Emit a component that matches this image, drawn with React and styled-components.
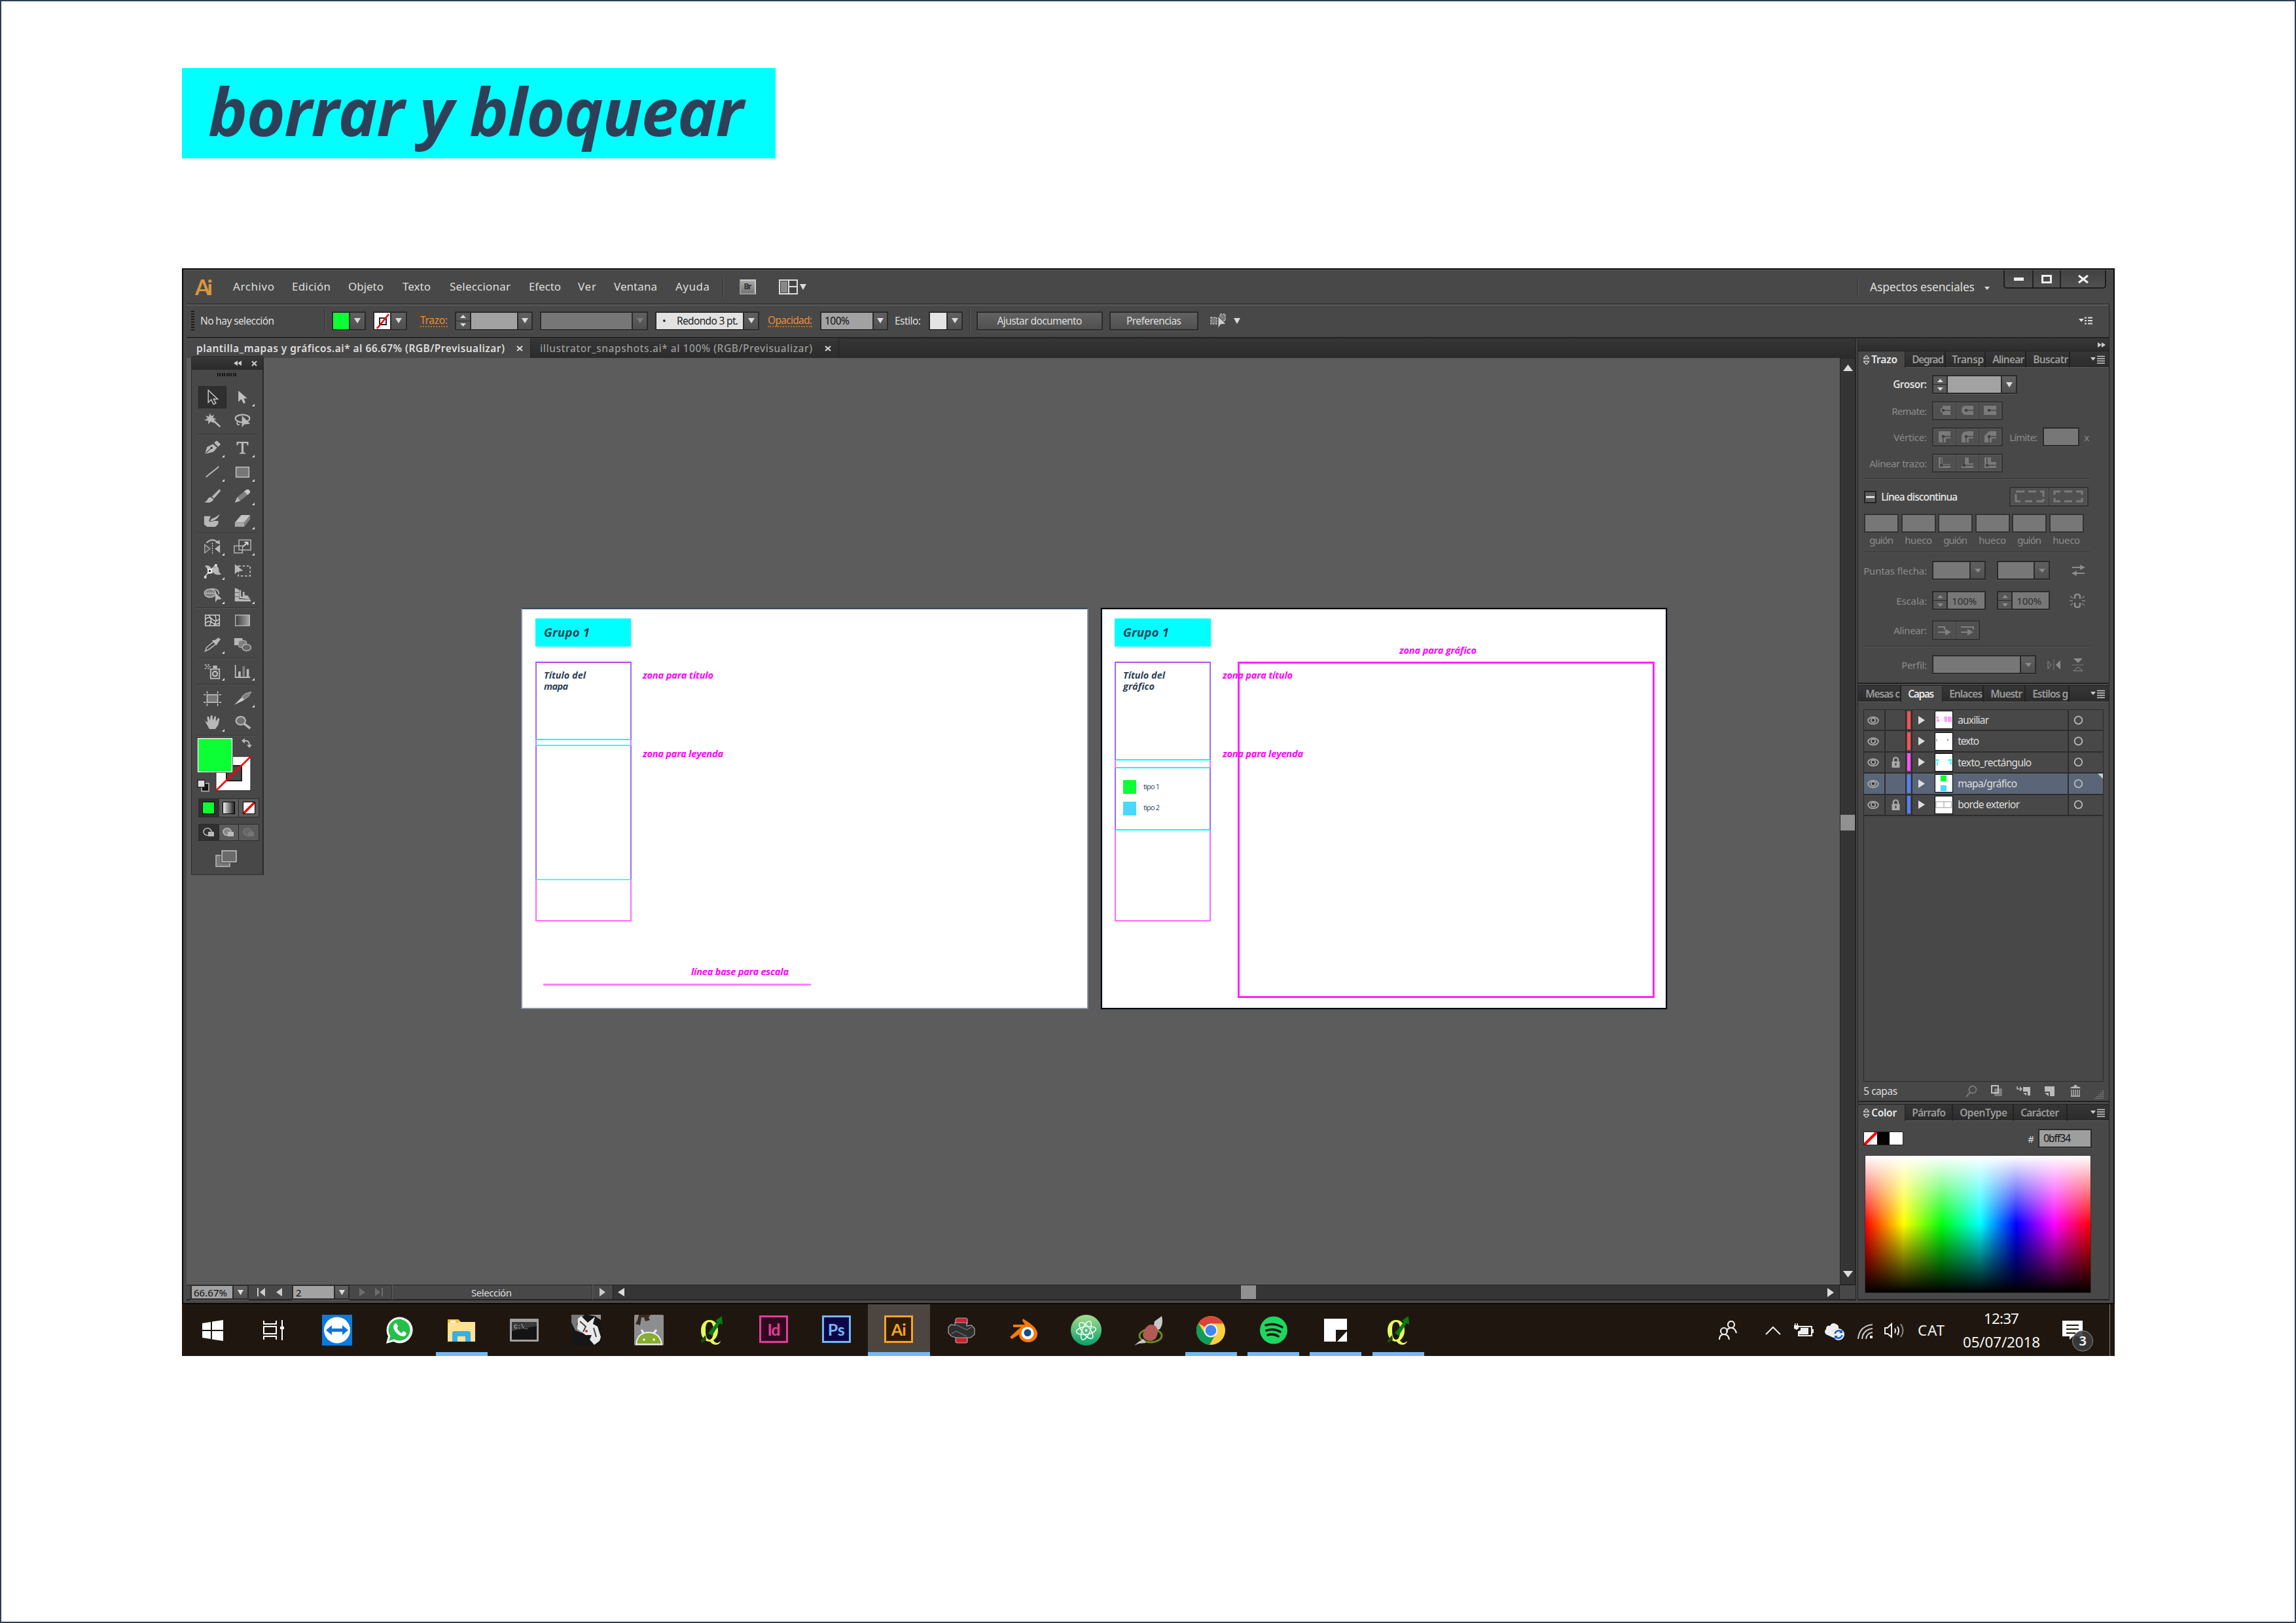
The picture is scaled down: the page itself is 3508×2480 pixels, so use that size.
import React, { useLayoutEffect, useRef, useState } from 'react';
import styled, { createGlobalStyle } from 'styled-components';

const Global = createGlobalStyle`
  *, *::before, *::after { box-sizing: border-box; }
  body { margin: 0; background: #fff; font-family: "Noto Sans", "Open Sans", sans-serif; }
  svg { display: block; flex: none; }
`;

/* ---------- text ---------- */
const TextBox = styled.span`
  display: block;
  flex: none;
  width: ${p => p.$w}px;
  margin-left: ${p => p.$ml || 0}px;
  white-space: pre;
  line-height: 1.2;
  font-family: ${p => p.$family || '"Noto Sans"'}, "Open Sans", sans-serif;
  font-size: ${p => p.$size || 16}px;
  font-weight: ${p => p.$weight || 400};
  font-style: ${p => (p.$italic ? 'italic' : 'normal')};
  color: ${p => p.$color || '#dedede'};
  border-bottom: ${p => (p.$dotted ? '2px dotted #b9722c' : '0')};
`;

function Label({ w, children, ...rest }) {
  const ref = useRef(null);
  const [spacing, setSpacing] = useState(0);
  useLayoutEffect(() => {
    const natural = ref.current.getBoundingClientRect().width;
    setSpacing((w - natural) / Math.max(1, children.length - 1));
  }, [w, children]);
  return (
    <TextBox $w={w} {...rest}>
      <span ref={ref} style={{ letterSpacing: spacing }}>{children}</span>
    </TextBox>
  );
}

/* ---------- page ---------- */
const Page = styled.main`
  width: 3508px;
  height: 2480px;
  border: 2px solid #2e3f57;
  padding: 102px 0 0 276px;
  background: #fff;
  display: flex;
  flex-direction: column;
  overflow: hidden;
`;
const Heading = styled.h1`
  margin: 0 0 168px;
  width: 907px;
  height: 138px;
  padding: 0 0 6px 40px;
  background: #00ffff;
  display: flex;
  align-items: center;
`;
const Desktop = styled.section`
  width: 2953px;
  height: 1662px;
  display: flex;
  flex-direction: column;
`;
const AppFrame = styled.div`
  height: 1583px;
  border: 2px solid #070707;
  background: #484848;
  display: flex;
  flex-direction: column;
`;

/* ---------- menu bar ---------- */
const MenuBar = styled.header`
  height: 52px;
  flex: none;
  display: flex;
  align-items: center;
  border-top: 1px solid #666;
`;
const Push = styled.div` flex: 1; `;
const VRule = styled.i`
  flex: none;
  width: 2px;
  height: ${p => p.$h || 30}px;
  margin-left: ${p => p.$ml || 0}px;
  background: #333;
  border-right: 1px solid #5e5e5e;
`;
const Slot = styled.div`
  flex: none;
  margin-left: ${p => p.$ml || 0}px;
  margin-top: ${p => p.$mt || 0}px;
`;
const BridgeBadge = styled.div`
  width: 25px;
  height: 23px;
  margin: 0 0 0 24px;
  background: linear-gradient(#aaa, #757575);
  border: 2px solid #999;
  border-right-color: #ccc;
  border-top-color: #ccc;
  display: flex;
  align-items: center;
  justify-content: center;
`;
const WinButtons = styled.div`
  align-self: flex-start;
  width: 157px;
  height: 28px;
  margin: 0 11px 0 21px;
  display: grid;
  grid-template-columns: 42px 42px 1fr;
  border: 2px solid #1e1e1e;
  border-top: 0;
  border-radius: 0 0 5px 5px;
  background: linear-gradient(#424242, #505050);
`;
const WinButton = styled.div`
  display: flex;
  align-items: center;
  justify-content: center;
  border-left: ${p => (p.$first ? 0 : 2)}px solid #222;
`;

/* ---------- control bar ---------- */
const Body = styled.div`
  margin: 0 6px 4px 5px;
  flex: 1;
  min-height: 0;
  display: flex;
  flex-direction: column;
  border-right: 1px solid #222;
`;
const ControlBar = styled.div`
  height: 53px;
  flex: none;
  display: flex;
  align-items: center;
  border-top: 1px solid #222;
  border-bottom: 2px solid #222;
  box-shadow: inset 0 2px #5c5c5c;
`;
const Grip = styled.i`
  width: 5px;
  height: 31px;
  margin-left: 7px;
  background: repeating-linear-gradient(#1c1c1c 0 2px, transparent 2px 4px);
`;
const Control = styled.div`
  flex: none;
  display: flex;
  height: ${p => p.$h || 29}px;
  width: ${p => (p.$w ? p.$w + 'px' : 'auto')};
  margin-left: ${p => p.$ml || 0}px;
  border: 2px solid #2b2b2b;
  background: #2b2b2b;
  box-shadow: 0 1px #585858;
`;
const Value = styled.div`
  flex: 1;
  min-width: 0;
  background: ${p => p.$bg || '#a2a2a2'};
  display: flex;
  align-items: center;
  overflow: hidden;
`;
const Drop = styled.div`
  width: ${p => p.$w || 22}px;
  margin-left: 2px;
  background: linear-gradient(#606060, #505050);
  display: flex;
  align-items: center;
  justify-content: center;
`;
const StepBox = styled.div`
  width: ${p => p.$w || 21}px;
  margin-right: 2px;
  display: grid;
  grid-template-rows: 1fr 1fr;
  gap: 1px;
  > * { background: #585858; display: flex; align-items: center; justify-content: center; }
`;
const Button = styled.div`
  flex: none;
  width: ${p => p.$w}px;
  height: 29px;
  margin-left: ${p => p.$ml}px;
  border: 2px solid #2b2b2b;
  background: linear-gradient(#626262, #505050);
  box-shadow: 0 1px #585858;
  display: flex;
  align-items: center;
  justify-content: center;
`;

const Tri = ({ dir = 'down', w = 10, h = 8, c = '#dcdcdc' }) => {
  const d = {
    down: `M0 0H${w}L${w / 2} ${h}Z`,
    up: `M0 ${h}H${w}L${w / 2} 0Z`,
    left: `M${w} 0V${h}L0 ${h / 2}Z`,
    right: `M0 0V${h}L${w} ${h / 2}Z`,
  }[dir];
  return <svg width={w} height={h}><path d={d} fill={c} /></svg>;
};
const Steps = ({ w, c }) => (
  <StepBox $w={w}>
    <div><Tri dir="up" w={9} h={5} c={c} /></div>
    <div><Tri w={9} h={5} c={c} /></div>
  </StepBox>
);

/* ---------- document area ---------- */
const Work = styled.div`
  flex: 1;
  min-height: 0;
  display: flex;
`;
const DocColumn = styled.div`
  position: relative;
  width: 2552px;
  display: flex;
  flex-direction: column;
  border-right: 1px solid #222;
`;
const TabBar = styled.div`
  height: 30px;
  flex: none;
  display: flex;
  background: linear-gradient(#363636, #2b2b2b);
`;
const DocTab = styled.div`
  width: ${p => p.$w}px;
  display: flex;
  align-items: center;
  background: ${p => (p.$active ? '#484848' : 'transparent')};
  border-right: 1px solid #222;
  border-top: 1px solid ${p => (p.$active ? '#5c5c5c' : '#444')};
`;
const Viewport = styled.div`
  flex: 1;
  min-height: 0;
  display: flex;
`;
const Canvas = styled.div`
  position: relative;
  width: 2526px;
  background: #5c5c5c;
  overflow: hidden;
`;
const VScroll = styled.div`
  flex: 1;
  background: #353535;
  border: 1px solid #262626;
  display: flex;
  flex-direction: column;
  align-items: center;
  padding-top: 9px;
`;
const VThumb = styled.i`
  width: 100%;
  height: 24px;
  margin: 678px 0 673px;
  background: #919191;
`;
const StatusBar = styled.div`
  height: 24px;
  flex: none;
  display: flex;
  align-items: stretch;
  border-top: 1px solid #222;
  border-bottom: 2px solid #222;
`;
const StatusTools = styled.div`
  width: 651px;
  display: flex;
  align-items: center;
`;
const HScroll = styled.div`
  width: 1875px;
  background: #353535;
  display: flex;
  align-items: center;
  border-left: 1px solid #222;
  border-right: 1px solid #222;
`;
const HThumb = styled.i`
  width: 23px;
  height: 100%;
  margin-left: 942px;
  background: #919191;
`;

/* ---------- artboards (free canvas) ---------- */
const Artboard = styled.div`
  position: absolute;
  left: ${p => p.$x}px;
  top: 382px;
  width: ${p => p.$w}px;
  height: 613px;
  background: #fff;
  border: 2px solid ${p => (p.$active ? '#05070a' : '#8b9097')};
  border-top-color: ${p => (p.$active ? '#05070a' : '#3e4b60')};
  outline: 1px solid ${p => (p.$active ? '#3e4b60' : '#4c5563')};
`;
const Placed = styled.div`
  position: absolute;
  left: ${p => p.$x - 2}px;
  top: ${p => p.$y - 2}px;
  display: flex;
`;
const Block = styled(Placed)`
  width: ${p => p.$w}px;
  height: ${p => p.$h}px;
  background: ${p => p.$bg || 'none'};
  border: ${p => p.$bw || 0}px solid ${p => p.$bc || 'transparent'};
  border-top-color: ${p => p.$top || p.$bc || 'transparent'};
  border-bottom-color: ${p => p.$bottom || p.$bc || 'transparent'};
`;
const Note = ({ x, y, w, children, size = 14.5, color = '#ff00ff', weight = 700, italic = true }) => (
  <Placed $x={x} $y={y}>
    <Label w={w} $size={size} $weight={weight} $italic={italic} $color={color} $family='"Open Sans"'>{children}</Label>
  </Placed>
);

/* ---------- tool box ---------- */
const ToolBox = styled.aside`
  position: absolute;
  left: 7px;
  top: 27px;
  width: 111px;
  height: 793px;
  background: #484848;
  border: 1px solid #2a2a2a;
  border-right-width: 2px;
  border-radius: 4px 4px 0 0;
  display: flex;
  flex-direction: column;
`;
const ToolHead = styled.div`
  height: 20px;
  background: linear-gradient(#383838, #2a2a2a);
  border-radius: 4px 4px 0 0;
  display: flex;
  align-items: center;
  justify-content: flex-end;
  gap: 15px;
  padding-right: 8px;
`;
const ToolGrip = styled.i`
  width: 29px;
  height: 5px;
  margin: 5px 0 14px 39px;
  background: repeating-linear-gradient(90deg, #161616 0 2px, transparent 2px 3.4px);
`;
const ToolGroup = styled.div`
  height: ${p => p.$h}px;
  margin-left: 8px;
  width: 92px;
  display: grid;
  grid-template-columns: 46px 46px;
  grid-auto-rows: 1fr;
`;
const ToolCell = styled.div`
  position: relative;
  display: flex;
  align-items: center;
  justify-content: center;
  ${p => p.$on && 'background: #2f2f2f; border: 1px solid #272626; margin: 1px 1px 1px 2px;'}
`;
const Corner = styled.i`
  position: absolute;
  right: 4px;
  bottom: 4px;
  border: 2px solid transparent;
  border-right-color: #ddd;
  border-bottom-color: #ddd;
`;
const ToolRule = styled.div`
  height: ${p => p.$h}px;
  margin: 0 8px;
  background: linear-gradient(#343434 50%, #565656 50%) center / 100% 2px no-repeat;
`;
const TripleRow = styled.div`
  margin: ${p => p.$mt}px 0 0 10px;
  width: 93px;
  height: ${p => p.$h}px;
  display: grid;
  grid-template-columns: repeat(3, 1fr);
  gap: 1px;
  background: #2b2b2b;
  border: 1px solid #2b2b2b;
`;
const TripleCell = styled.div`
  background: ${p => (p.$on ? '#303030' : '#5b5b5b')};
  display: flex;
  align-items: center;
  justify-content: center;
`;
const Chip = styled.i`
  width: 19px;
  height: 19px;
  border: 1px solid #000;
  background: ${p => p.$bg};
`;
const G = '#b8b8b8';
const D = '#808080';
const TOOLS = {
  select: <path d="M8 1V22L13 17L17 25L21 23L17 16H24Z" fill="#333" stroke="#c8c8c8" strokeWidth="1.6" />,
  direct: <path d="M8 2V21L13 16L17 24L20 22L17 15H23Z" fill="#c0c0c0" />,
  wand: <g><path d="M14 10L28 23" stroke={G} strokeWidth="3" /><path d="M11 0L13 5L18 3L16 8L22 10L16 12L18 17L12 14L8 19V13L1 12L7 9L3 4L9 6Z" fill={G} /></g>,
  lasso: <g><ellipse cx="15" cy="9" rx="12" ry="6.5" fill="none" stroke={G} strokeWidth="2.4" /><path d="M8 14C3 17 7 21 10 19" fill="none" stroke={G} strokeWidth="2" /><path d="M14 4V24L18 19L28 18Z" fill={G} /></g>,
  pen: <g><path d="M2 24L6 12L16 7L23 13L17 20Z" fill={G} /><path d="M18 5L22 1L29 7L25 12Z" fill={G} /><path d="M2 24L13 14" stroke="#444" strokeWidth="1.4" /><circle cx="13.500" cy="13.500" r="1.800" fill="#333" /></g>,
  type: <path d="M5 3H25V9H23L22 5.500H16.800V21L20 22V23.500H10V22L13.200 21V5.500H8L7 9H5Z" fill={G} />,
  line: <path d="M4 22L26 4" stroke={G} strokeWidth="2.200" />,
  rect: <rect x="4" y="5" width="22" height="17" fill="#777" stroke="#c4c4c4" strokeWidth="1.600" />,
  brush: <g><path d="M14 14L27 1L29 4L18 17Z" fill={G} /><path d="M1 23C8 22 6 15 12 15L17 18C16 23 8 26 1 23Z" fill={G} /></g>,
  pencil: <g><path d="M2 24L6 15L19 4L25 10L11 21Z" fill={D} /><path d="M2 24L6 15L11 21Z" fill={G} /><path d="M18 5L22 2Q28 1 28 7L24 11Z" fill="#ccc" /></g>,
  blob: <g><path d="M1 6H12L9 14H25V19L20 24H6L1 20Z" fill={G} /><path d="M10 15Q13 9 19 8L29 1L25 8Q20 15 10 15Z" fill={G} stroke="#444" /></g>,
  eraser: <g><path d="M2 17L13 4H28L18 17Z" fill="#c4c4c4" /><path d="M2 17H18V24H2Z" fill="#a8a8a8" /><path d="M18 17L28 4V11L18 24Z" fill={D} /></g>,
  reflect: <g><path d="M5 7Q15 -3 25 7" fill="none" stroke={G} strokeWidth="2.400" /><path d="M20 7L28 9L27 2Z" fill={G} /><path d="M2 10V24L11 17Z" fill="#555" stroke={G} strokeWidth="1.300" /><path d="M28 10V24L19 17Z" fill={G} /><path d="M15 7V25" stroke="#ddd" strokeWidth="1.500" strokeDasharray="2 2" /></g>,
  scale: <g fill="none" stroke={G} strokeWidth="1.600"><rect x="1" y="12" width="14" height="12" /><rect x="9" y="2" width="20" height="17" /><path d="M16 13L24 6M18 6H24V11" stroke="#ddd" strokeWidth="2" /></g>,
  warp: <g><path d="M2 5Q9 2 13 9Q19 9 21 5Q27 7 26 14Q27 17 30 19Q20 22 17 16Q12 20 6 18Q9 11 2 5Z" fill={G} /><path d="M2 23L20 4" stroke="#ddd" strokeWidth="1.500" /><path d="M8 11h5v5h-5z" fill="#333" stroke="#fff" strokeWidth="1.500" /><path d="M1 22h4v4h-4zM19 2h4v4h-4z" fill="#ddd" /></g>,
  transform: <g><rect x="8" y="5" width="20" height="17" fill="none" stroke={G} strokeWidth="2" strokeDasharray="4 3" /><path d="M2 2V19L6 15L16 13Z" fill={G} /></g>,
  builder: <g><ellipse cx="11" cy="10" rx="9.500" ry="7" fill={D} stroke={G} strokeWidth="1.800" /><path d="M13 3Q26 2 26 12" fill="none" stroke={G} strokeWidth="2" /><path d="M4 10H19" stroke="#eee" strokeWidth="1.500" strokeDasharray="2 1.500" /><path d="M20 9V26L23 21L31 20Z" fill={G} /></g>,
  persp: <g><path d="M2 1L9 4V20L29 21V24H2Z" fill={G} /><path d="M11 5V17L27 19M17 8V15L25 16" fill="none" stroke={G} strokeWidth="3" /><path d="M2 9H9M2 16H9" stroke="#555" /></g>,
  mesh: <g fill="none" stroke="#ccc" strokeWidth="1.700"><rect x="3" y="4" width="24" height="18" fill="#444" /><path d="M3 11Q10 5 15 11T27 11M3 18Q9 12 15 17T27 17M9 4Q16 12 10 22M19 4Q24 12 18 22" /></g>,
  gradient: <g><defs><linearGradient id="tg"><stop offset="0" stopColor="#3c3c3c" /><stop offset="1" stopColor="#aaa" /></linearGradient></defs><rect x="3" y="4" width="24" height="18" fill="url(#tg)" stroke="#bbb" strokeWidth="1.500" /></g>,
  dropper: <g><path d="M3 24L5 18L17 8L21 12L9 21Z" fill="#444" stroke={G} strokeWidth="1.800" /><path d="M14 6L20 5L25 1L29 4L25 9L22 14Z" fill={G} /></g>,
  blend: <g><rect x="1" y="2" width="14" height="12" fill={G} /><rect x="8" y="6" width="14" height="12" rx="4" fill={D} stroke={G} /><ellipse cx="22" cy="18" rx="7.500" ry="5.500" fill="#666" stroke={G} strokeWidth="1.600" /></g>,
  spray: <g><path d="M2 2h3M7 2h3M4 5h3M9 5h3M2 8h3M7 8h3" stroke={G} strokeWidth="1.800" /><rect x="12" y="9" width="15" height="16" fill="#555" stroke={G} strokeWidth="2" /><path d="M16 3H23V8H16Z" fill={G} /><circle cx="19.500" cy="17" r="4" fill="none" stroke="#ccc" strokeWidth="2" /></g>,
  graph: <g><path d="M3 2V23H28" fill="none" stroke={G} strokeWidth="2" /><path d="M8 13H12V22H8ZM22 9H26V22H22Z" fill={G} /><path d="M15 4H19V22H15Z" fill={D} /></g>,
  artboard: <g stroke="#ccc" strokeWidth="1.600"><rect x="6" y="7" width="18" height="13" fill="#777" /><path d="M6 1V5M24 1V5M6 22V26M24 22V26M0 7H4M26 7H30M0 20H4M26 20H30" /></g>,
  slice: <g><path d="M1 24L14 11L18 16Z" fill="#ccc" /><path d="M14 10L20 5L30 2L25 10L18 15Z" fill={D} stroke={G} /></g>,
  hand: <path d="M2 10L7 13L6 3L9 3L11 10L12 1H15L16 10L19 2L21 3L21 11L25 5L27 7L25 17L20 24H10Z" fill={G} />,
  zoom: <g><path d="M18 15L28 23" stroke={G} strokeWidth="4" /><ellipse cx="12" cy="10" rx="8" ry="7" fill="#707070" stroke={G} strokeWidth="2.400" /></g>,
};
const GROUPS = [
  [72, 5, [['select', 0], ['direct', 1], ['wand', 0], ['lasso', 0]]],
  [147, 3, [['pen', 1], ['type', 1], ['line', 1], ['rect', 1], ['brush', 0], ['pencil', 1], ['blob', 0], ['eraser', 1]]],
  [111, 3, [['reflect', 1], ['scale', 1], ['warp', 1], ['transform', 0], ['builder', 1], ['persp', 1]]],
  [73, 5, [['mesh', 0], ['gradient', 0], ['dropper', 1], ['blend', 0]]],
  [36, 4, [['spray', 1], ['graph', 1]]],
  [74, 3, [['artboard', 0], ['slice', 1], ['hand', 1], ['zoom', 0]]],
];

function Tools() {
  return (
    <ToolBox>
      <ToolHead>
        <svg width="12" height="8"><path d="M6 0V8L0 4ZM12 0V8L6 4Z" fill="#ccc" /></svg>
        <svg width="9" height="9"><path d="M1 1L8 8M8 1L1 8" stroke="#ccc" strokeWidth="2" /></svg>
      </ToolHead>
      <ToolGrip />
      {GROUPS.map(([h, r, cells], i) => (
        <React.Fragment key={i}>
          <ToolGroup $h={h}>
            {cells.map(([name, more]) => (
              <ToolCell key={name} $on={name === 'select'}>
                <svg width="27" height="24" viewBox="0 0 30 26">{TOOLS[name]}</svg>
                {more ? <Corner /> : null}
              </ToolCell>
            ))}
          </ToolGroup>
          <ToolRule $h={r} />
        </React.Fragment>
      ))}
      <Slot $ml={8} $mt={2}>
        <svg width="86" height="84">
          <rect x="29" y="29" width="53" height="52" fill="#fff" stroke="#222" />
          <rect x="45" y="43" width="23" height="23" fill="#484848" stroke="#222" strokeWidth="2" />
          <path d="M29 81L82 29" stroke="#f00" strokeWidth="2.600" />
          <rect x="0" y="0" width="55" height="54" fill="#222" />
          <rect x="1.500" y="1.500" width="52" height="51" fill="#0bff34" stroke="#fff" strokeWidth="1.500" />
          <path d="M71 5H75Q80 5 80 12" fill="none" stroke={G} strokeWidth="1.800" />
          <path d="M73 1V9L68 5ZM76 11H84L80 16Z" fill={G} />
          <rect x="7" y="70" width="11" height="12" fill="#111" stroke="#999" strokeWidth="2" />
          <rect x="1" y="65" width="11" height="11" fill="#ddd" stroke="#222" strokeWidth="1.500" />
        </svg>
      </Slot>
      <TripleRow $mt={9} $h={29}>
        <TripleCell $on><Chip $bg="#0bff34" /></TripleCell>
        <TripleCell><Chip $bg="linear-gradient(90deg,#eee,#222)" /></TripleCell>
        <TripleCell><Chip $bg="linear-gradient(135deg,#fff 44%,#f00 44% 56%,#fff 56%)" /></TripleCell>
      </TripleRow>
      <TripleRow $mt={10} $h={26}>
        {[['#999', '#bbb', 1], ['#888', '#bbb', 0], ['#666', '#757575', 0]].map(([a, b, on], i) => (
          <TripleCell key={i} $on={on}>
            <svg width="18" height="16"><ellipse cx="7" cy="7" rx="6" ry="5.500" fill={i ? a : '#333'} stroke={b} strokeWidth="1.500" /><rect x="8" y="7" width="9" height="7" fill={b} /></svg>
          </TripleCell>
        ))}
      </TripleRow>
      <Slot $ml={36} $mt={14}>
        <svg width="33" height="27"><rect x="1" y="8" width="21" height="17" fill="#777" stroke="#bbb" strokeWidth="1.500" /><rect x="10" y="1" width="22" height="17" fill="#666" stroke="#222" strokeWidth="3" /><rect x="10" y="1" width="22" height="17" fill="#6a6a6a" stroke="#ccc" strokeWidth="1.500" /></svg>
      </Slot>
    </ToolBox>
  );
}

/* ---------- dock ---------- */
const Dock = styled.aside`
  width: 384px;
  margin-left: 2px;
  border-left: 1px solid #222;
  display: flex;
  flex-direction: column;
`;
const DockHead = styled.div`
  height: 19px;
  flex: none;
  background: linear-gradient(#383838, #2c2c2c);
  display: flex;
  justify-content: flex-end;
  align-items: center;
  padding-right: 5px;
`;
const Panel = styled.section`
  height: ${p => p.$h}px;
  flex: none;
  display: flex;
  flex-direction: column;
  border-bottom: 2px solid #222;
  margin-bottom: ${p => p.$mb || 0}px;
`;
const PanelTabs = styled.div`
  height: 26px;
  flex: none;
  display: flex;
  background: linear-gradient(#363636, #2b2b2b);
  border-top: 1px solid #222;
`;
const PanelTab = styled.div`
  width: ${p => p.$w}px;
  display: flex;
  align-items: center;
  overflow: hidden;
  padding-left: ${p => p.$pl}px;
  border-right: 2px solid #222;
  ${p => (p.$active ? 'background:#484848; border-right-width:1px;' : 'border-bottom:1px solid #5c5c5c;')}
`;
const TabEnd = styled.div`
  flex: 1;
  display: flex;
  align-items: center;
  justify-content: flex-end;
  padding-right: 6px;
  border-bottom: 1px solid #5c5c5c;
`;
const MenuGlyph = () => (
  <svg width="22" height="13"><path d="M0 3H8L4 8Z" fill="#ccc" /><path d="M10 1.500H22M10 5H22M10 8.500H22M10 12H22" stroke="#ccc" strokeWidth="1.600" /></svg>
);
const Diamond = () => (
  <svg width="9" height="14"><path d="M4.500 0L9 5H0ZM4.500 14L9 9H0Z" fill="none" stroke="#ccc" strokeWidth="1.300" /></svg>
);
function Tabs({ items }) {
  return (
    <PanelTabs>
      {items.map(t => (
        <PanelTab key={t.t} $w={t.tab} $pl={t.pl} $active={t.on}>
          {t.icon ? <Diamond /> : null}
          <Label w={t.w} $ml={t.icon ? 3 : 0} $size={15.500} $weight={600} $color={t.on ? '#e8e8e8' : '#9a9a9a'}>{t.t}</Label>
        </PanelTab>
      ))}
      <TabEnd><MenuGlyph /></TabEnd>
    </PanelTabs>
  );
}
const Row = styled.div`
  height: ${p => p.$h || 29}px;
  flex: none;
  margin: ${p => p.$mt || 0}px 0 0 ${p => p.$ml || 8}px;
  display: flex;
  align-items: center;
`;
const Caption = styled.div`
  width: 97px;
  margin-right: 8px;
  display: flex;
  justify-content: flex-end;
`;
const PanelRule = styled.hr`
  height: 2px;
  flex: none;
  width: 346px;
  margin: ${p => p.$mt}px 0 0 8px;
  border: 0;
  background: linear-gradient(#323232 50%, #585858 50%);
`;
const Segments = styled.div`
  display: grid;
  grid-template-columns: repeat(${p => p.$n}, 1fr);
  gap: 1px;
  width: ${p => p.$w}px;
  height: ${p => p.$h || 29}px;
  margin-left: ${p => p.$ml || 0}px;
  background: #333;
  border: 2px solid #333;
  > * { background: #505050; border: 1px solid #5a5a5a; display: flex; align-items: center; justify-content: center; }
`;
const DashGrid = styled.div`
  margin: 11px 0 0 9px;
  width: 338px;
  display: grid;
  grid-template-columns: repeat(6, 53px);
  column-gap: 3.500px;
`;
const DashItem = styled.div`
  display: flex;
  flex-direction: column;
  align-items: center;
  gap: 2px;
`;
const DashBox = styled.div`
  width: 53px;
  height: 29px;
  border: 2px solid #333;
  background: #777;
`;
const Check = styled.div`
  width: 19px;
  height: 19px;
  margin-left: 1px;
  border: 2px solid #222;
  background: #5a5a5a;
  display: flex;
  align-items: center;
  justify-content: center;
  &::after { content: ''; width: 13px; height: 3px; background: #ddd; }
`;
const dim = '#8c8c8c';
const seg = '#7a7a7a';
const SEG = [
  [
    <path d="M16 2H28V16H16V12H13V6H16Z" fill={seg} />,
    <path d="M28 2H17Q10 2 10 9T17 16H28Z" fill={seg} />,
    <path d="M9 2H28V16H9Z" fill={seg} />,
  ],
  [
    <path d="M10 1H28V12H21V18H10Z" fill={seg} />,
    <path d="M28 1H19Q10 1 10 10V18H21V12H28Z" fill={seg} />,
    <path d="M28 1H17L10 8V18H21V12H28Z" fill={seg} />,
  ],
  [
    <path d="M10 1H16V11H28V17H10Z" fill={seg} />,
    <path d="M15 1H21V10H28V17H10V14H15Z" fill={seg} />,
    <path d="M10 1H20V8H28V17H10Z" fill={seg} />,
  ],
];
const SegRow = ({ i }) => (
  <Segments $n={3} $w={108}>
    {SEG[i].map((g, k) => (
      <div key={k}>
        <svg width="30" height="19" viewBox="4 0 30 19">{g}<path d={i === 0 ? 'M17 9H28' : i === 1 ? 'M17 9V18M17 9H28' : 'M14 2V13H28'} stroke="#484848" strokeWidth="1.500" fill="none" /><rect x={i === 2 ? 12 : 15} y={i === 2 ? 11 : 7} width="4" height="4" fill="#414141" /></svg>
      </div>
    ))}
  </Segments>
);

function StrokePanel() {
  return (
    <Panel $h={509} $mb={2}>
      <Tabs items={[
        { t: 'Trazo', w: 40, tab: 72, pl: 8, on: true, icon: true },
        { t: 'Degrad', w: 49, tab: 62, pl: 10 },
        { t: 'Transp', w: 49, tab: 61, pl: 9 },
        { t: 'Alinear', w: 49, tab: 62, pl: 10 },
        { t: 'Buscatr', w: 54, tab: 67, pl: 10 },
      ]} />
      <Row $mt={11}>
        <Caption><Label w={52} $size={15.500} $weight={600}>Grosor:</Label></Caption>
        <Control $w={130}><Steps w={20} /><Value /><Drop $w={21}><Tri /></Drop></Control>
      </Row>
      <Row $mt={11}>
        <Caption><Label w={54} $size={15} $color={dim}>Remate:</Label></Caption>
        <SegRow i={0} />
      </Row>
      <Row $mt={11}>
        <Caption><Label w={51} $size={15} $color={dim}>Vértice:</Label></Caption>
        <SegRow i={1} />
        <Label w={43} $ml={10} $size={15} $color={dim}>Límite:</Label>
        <Control $ml={8} $w={56}><Value $bg="#777" /></Control>
        <Label w={8} $ml={7} $size={15} $color={dim}>x</Label>
      </Row>
      <Row $mt={11}>
        <Caption><Label w={88} $size={15} $color={dim}>Alinear trazo:</Label></Caption>
        <SegRow i={2} />
      </Row>
      <PanelRule $mt={9} />
      <Row $mt={11} $h={30}>
        <Check />
        <Label w={117} $ml={7} $size={15.500} $weight={500} $color="#e6e6e6">Línea discontinua</Label>
        <Segments $n={2} $w={121} $ml={79} $h={30}>
          <div><svg width="48" height="20"><path d="M3 10V17H10M3 10V6M3 2H16M22 2H34M40 2H45V10M45 13V17M17 17H28M34 17H45" fill="none" stroke={seg} strokeWidth="3" /></svg></div>
          <div><svg width="48" height="20"><path d="M3 7V2H12M18 2H30M36 2H45V7M45 12V17H36M30 17H18M12 17H3V12" fill="none" stroke={seg} strokeWidth="3" /></svg></div>
        </Segments>
      </Row>
      <DashGrid>
        {['guión', 'hueco', 'guión', 'hueco', 'guión', 'hueco'].map((t, i) => (
          <DashItem key={i}><DashBox /><Label w={i % 2 ? 42 : 37} $size={15} $color={dim}>{t}</Label></DashItem>
        ))}
      </DashGrid>
      <PanelRule $mt={9} />
      <Row $mt={12}>
        <Caption><Label w={97} $size={15} $color={dim}>Puntas flecha:</Label></Caption>
        <Control $w={82}><Value $bg="#777" /><Drop $w={21}><Tri c="#8a8a8a" h={6} /></Drop></Control>
        <Control $ml={17} $w={81}><Value $bg="#777" /><Drop $w={21}><Tri c="#8a8a8a" h={6} /></Drop></Control>
        <Slot $ml={33}><svg width="21" height="17"><path d="M1 4H14M7 13H20" stroke={dim} strokeWidth="2" /><path d="M13 0L21 4L13 8ZM8 9L0 13L8 17Z" fill={dim} /></svg></Slot>
      </Row>
      <Row $mt={17}>
        <Caption><Label w={47} $size={15} $color={dim}>Escala:</Label></Caption>
        <Control $w={82}><Steps w={20} c="#8a8a8a" /><Value $bg="#777"><Label w={38} $ml={6} $size={15} $color="#2e2e2e">100%</Label></Value></Control>
        <Control $ml={17} $w={81}><Steps w={20} c="#8a8a8a" /><Value $bg="#777"><Label w={38} $ml={6} $size={15} $color="#2e2e2e">100%</Label></Value></Control>
        <Slot $ml={30}><svg width="24" height="22"><path d="M8 8V5Q8 1 12 1T16 5V8M8 14V17Q8 21 12 21T16 17V14" fill="none" stroke={dim} strokeWidth="2.600" /><path d="M1 4L5 7M0 11H5M1 18L5 15M23 4L19 7M24 11H19M23 18L19 15" stroke={dim} strokeWidth="1.500" /></svg></Slot>
      </Row>
      <Row $mt={15} $h={31}>
        <Caption><Label w={51} $size={15} $color={dim}>Alinear:</Label></Caption>
        <Segments $n={2} $w={73} $h={30}>
          <div><svg width="20" height="16"><path d="M0 3H10V7M0 11H12" fill="none" stroke="#818181" strokeWidth="2" /><path d="M11 6L20 11L11 16Z" fill="#818181" /></svg></div>
          <div><svg width="20" height="16"><path d="M0 3H19V7M0 11H10" fill="none" stroke="#818181" strokeWidth="2" /><path d="M10 6L19 11L10 16Z" fill="#818181" /></svg></div>
        </Segments>
      </Row>
      <PanelRule $mt={9} />
      <Row $mt={12}>
        <Caption><Label w={39} $size={15} $color={dim}>Perfil:</Label></Caption>
        <Control $w={159}><Value $bg="#777" /><Drop $w={21}><Tri c="#8a8a8a" h={6} /></Drop></Control>
        <Slot $ml={17}><svg width="20" height="16"><path d="M1 2V14L6 8Z" fill="none" stroke={dim} /><path d="M20 1V15L13 8Z" fill={dim} /><path d="M10 0V16" stroke={dim} strokeDasharray="2 1" /></svg></Slot>
        <Slot $ml={18}><svg width="18" height="22"><path d="M2 1H16L9 8Z" fill={dim} /><path d="M0 11H18" stroke={dim} strokeDasharray="2 1" /><path d="M2 20H16L9 14Z" fill="none" stroke={dim} /></svg></Slot>
      </Row>
    </Panel>
  );
}

const LayerList = styled.div`
  flex: none;
  width: 367px;
  height: 569px;
  margin: 11px 0 0 8px;
  border: 1px solid #2b2b2b;
`;
const LayerRow = styled.div`
  position: relative;
  height: 32.400px;
  display: grid;
  grid-template-columns: 33px 32px 9px 27px 35px 177px 1fr;
  background: ${p => (p.$on ? '#5a6678' : '#484848')};
  border-bottom: 2px solid #2d2d2d;
`;
const LayerCell = styled.div`
  display: flex;
  align-items: center;
  justify-content: ${p => p.$j || 'center'};
  border-right: ${p => (p.$line ? 2 : 0)}px solid #2d2d2d;
`;
const LayerBar = styled.i`
  width: 5px;
  height: 27px;
  background: ${p => p.$c};
`;
const Thumb = styled.div`
  width: 28px;
  height: 28px;
  border: 1.500px solid #000;
  background: #fff;
`;
const SelCorner = styled.i`
  position: absolute;
  right: 0;
  top: 0;
  border: 4px solid transparent;
  border-top-color: #ccc;
  border-right-color: #ccc;
`;
const LAYERS = [
  ['auxiliar', 48, '#ff5252', 0, <path d="M1 8h4v3h-4zM2 12h4v4h-4zM13 8h5v8h-4zM19 8h6v8h-6z" fill="#ff9dff" />],
  ['texto', 33, '#ff5252', 0, <path d="M1 9h1.500v4h-1.500zM18 9h2v3h-2z" fill="#9aa3b0" />],
  ['texto_rectángulo', 113, '#ff4fff', 1, <path d="M1 8h4v3h-4zM2 12h2v6h-2zM20 8h5v3h-5zM22 12h3v4h-3z" fill="#4ff" />],
  ['mapa/gráfico', 91, '#4f80ff', 0, <g><path d="M8 1h9v9h-9z" fill="#0bff34" /><path d="M8 16h9v9h-9z" fill="#47d9ff" /></g>],
  ['borde exterior', 95, '#4f80ff', 1, <path d="M0.500 8H25M0.500 17H25M1 8V17M13 8V17M24.500 8V17" stroke="#999" fill="none" />],
];
const LayerFoot = styled.div`
  height: 28px;
  display: flex;
  align-items: center;
  padding-left: 8px;
`;
function LayersPanel() {
  return (
    <Panel $h={637} $mb={3}>
      <Tabs items={[
        { t: 'Mesas c', w: 53, tab: 66, pl: 11 },
        { t: 'Capas', w: 40, tab: 63, pl: 10, on: true },
        { t: 'Enlaces', w: 51, tab: 63, pl: 10 },
        { t: 'Muestr', w: 49, tab: 64, pl: 10 },
        { t: 'Estilos g', w: 55, tab: 67, pl: 10 },
      ]} />
      <LayerList>
        {LAYERS.map(([name, w, c, lock, art]) => (
          <LayerRow key={name} $on={name.startsWith('mapa')}>
            <LayerCell $line $j="flex-start"><Slot $ml={5}><svg width="18" height="15"><ellipse cx="9" cy="8" rx="7.800" ry="5.300" fill="none" stroke="#aaa" strokeWidth="1.800" /><circle cx="9" cy="7.500" r="4" fill="#aaa" /><circle cx="9" cy="7.500" r="2.300" fill="#333" /></svg></Slot></LayerCell>
            <LayerCell $line>{lock ? <svg width="13" height="17"><path d="M3 8V5Q3 1.500 6.500 1.500T10 5V8" fill="none" stroke="#aaa" strokeWidth="2.200" /><path d="M0.500 7.500H12.500V17H0.500Z" fill="#aaa" /><path d="M6.500 10V14" stroke="#444" strokeWidth="2" /></svg> : null}</LayerCell>
            <LayerCell $line><LayerBar $c={c} /></LayerCell>
            <LayerCell><Tri dir="right" w={10} h={13} c="#ddd" /></LayerCell>
            <LayerCell $j="flex-end"><Thumb><svg width="25" height="25">{art}</svg></Thumb></LayerCell>
            <LayerCell $line $j="flex-start"><Label w={w} $ml={7} $size={15.500}>{name}</Label></LayerCell>
            <LayerCell $j="flex-start"><Slot $ml={7}><svg width="15" height="15"><circle cx="7.500" cy="7.500" r="5.800" fill="none" stroke="#bbb" strokeWidth="1.800" /></svg></Slot></LayerCell>
            {name.startsWith('mapa') ? <SelCorner /> : null}
          </LayerRow>
        ))}
      </LayerList>
      <LayerFoot>
        <Label w={52} $size={15.500}>5 capas</Label>
        <Slot $ml={104}><svg width="18" height="19"><circle cx="11" cy="7" r="5.500" fill="none" stroke="#777" strokeWidth="2" /><path d="M7 11L1 18" stroke="#777" strokeWidth="2" /></svg></Slot>
        <Slot $ml={21}><svg width="17" height="18"><rect x="6" y="6" width="10" height="10" fill="#777" stroke="#999" /><rect x="1" y="1" width="10" height="11" fill="none" stroke="#ccc" strokeWidth="1.800" /></svg></Slot>
        <Slot $ml={22}><svg width="22" height="17"><path d="M1 1V5H7M5 2L8 5L5 8" stroke="#bbb" strokeWidth="1.500" fill="none" /><path d="M10 2H21V15H17V9H10ZM10 11H15V15Z" fill="#bbb" /></svg></Slot>
        <Slot $ml={21}><svg width="16" height="17"><path d="M0 1H15V16H8V9H0Z" fill="#bbb" /><path d="M0 11H6V16Z" fill="#bbb" /></svg></Slot>
        <Slot $ml={22}><svg width="18" height="18"><path d="M1 5Q2 2 9 2T17 5Z" fill="#bbb" /><path d="M7 0H11V2H7Z" fill="#bbb" /><path d="M3 7V17M6 7V17M9 7V17M12 7V17M15 7V17M2 17H16" stroke="#bbb" strokeWidth="1.300" fill="none" /></svg></Slot>
        <Slot $ml={19} $mt={10}><svg width="15" height="15"><path d="M14 1V15M11 4V15M8 7V15M5 10V15M2 13V15" stroke="#888" strokeWidth="1.600" strokeDasharray="1.600 1.200" /></svg></Slot>
      </LayerFoot>
    </Panel>
  );
}

const Swatches = styled.div`
  width: 61px;
  height: 21px;
  border: 1px solid #222;
  display: grid;
  grid-template-columns: repeat(3, 1fr);
`;
const Sw = styled.i` background: ${p => p.$bg}; `;
const Spectrum = styled.div`
  margin: 11px 0 0 10px;
  width: 346px;
  height: 211px;
  border: 1px solid #333;
  background:
    linear-gradient(#fff 0%, rgba(255,255,255,0) 50%),
    linear-gradient(rgba(0,0,0,0) 50%, #000 100%),
    linear-gradient(90deg, #f00, #ff0 17%, #0f1 34%, #0ff 51%, #00f 67%, #f0f 84%, #f00);
`;
function ColorPanel() {
  return (
    <Panel $h={300}>
      <Tabs items={[
        { t: 'Color', w: 39, tab: 72, pl: 8, on: true, icon: true },
        { t: 'Párrafo', w: 52, tab: 73, pl: 10 },
        { t: 'OpenType', w: 73, tab: 93, pl: 10 },
        { t: 'Carácter', w: 59, tab: 82, pl: 10 },
      ]} />
      <Row $mt={12}>
        <Swatches>
          <Sw $bg="linear-gradient(135deg,#fff 43%,#f00 43% 57%,#fff 57%)" />
          <Sw $bg="#000" />
          <Sw $bg="#fff" />
        </Swatches>
        <Label w={9} $ml={190} $size={15}>#</Label>
        <Control $ml={7} $w={82}><Value $bg="#9e9e9e"><Label w={42} $ml={6} $size={15.500} $color="#111">0bff34</Label></Value></Control>
      </Row>
      <Spectrum />
    </Panel>
  );
}

/* ---------- task bar ---------- */
const TaskBar = styled.footer`
  flex: 1;
  background: #1f170f;
  display: flex;
`;
const TaskCell = styled.div`
  width: ${p => p.$w || 95.400}px;
  display: flex;
  flex: none;
  align-items: center;
  justify-content: center;
  background:
    ${p => (p.$run ? `linear-gradient(#76b9ed,#76b9ed) center bottom / ${p.$on ? '100%' : '79px'} 6px no-repeat,` : '')}
    ${p => (p.$on ? '#4d4640' : 'transparent')};
`;
const AdobeTile = styled.div`
  width: 44px;
  height: 42px;
  border: 3px solid ${p => p.$c};
  background: ${p => p.$bg};
  display: flex;
  align-items: center;
  justify-content: center;
  margin-bottom: 3px;
`;
const Tray = styled.div`
  flex: 1;
  display: flex;
  align-items: center;
  justify-content: flex-end;
`;
const Clock = styled.div`
  width: 118px;
  margin-left: 28px;
  display: flex;
  flex-direction: column;
  align-items: center;
  gap: 9px;
`;
const Notice = styled.div`
  position: relative;
  width: 47px;
  height: 47px;
  margin: 17px 25px 0 34px;
`;
const Badge = styled.div`
  position: absolute;
  right: 0;
  bottom: 0;
  width: 32px;
  height: 32px;
  border-radius: 50%;
  border: 1.500px solid #8a8a8a;
  background: rgba(60, 60, 60, .9);
  display: flex;
  align-items: center;
  justify-content: center;
`;
const ShowDesk = styled.i`
  width: 8px;
  align-self: stretch;
  border-left: 1px solid #8a857f;
`;

const Qgis = () => (
  <svg width="36" height="44">
    <path fillRule="evenodd" d="M15 6C24 6 28 13 28 22C28 29 25 34 21 37C24 42 28 42 32 38C31 45 20 46 16 39C7 39 2 32 2 22C2 13 7 6 15 6ZM15 9C10 9 9 15 9 22C9 30 11 36 15 36C19 36 21 30 21 22C21 14 19 9 15 9Z" fill="#e6fa5f" />
    <path d="M13 26L27 9L24 7L34 0L35 13L31 11L19 30Z" fill="#0c7a12" />
    <path d="M1 38L9 29L10 36L4 41Z" fill="#1d4a12" />
  </svg>
);
const ICONS = {
  win: <svg width="32" height="32"><path d="M0 5L13 3V15H0ZM15 2.500L32 0V15H15ZM0 17H13V29L0 27ZM15 17H32V32L15 29.500Z" fill="#fff" /></svg>,
  view: <svg width="32" height="31" fill="none" stroke="#fff" strokeWidth="2"><path d="M1 1V6H20V1M1 30V25H20V30M1 10H20V21H1ZM29 0V31" /><path d="M26 10H32V14H26Z" fill="#fff" stroke="none" /></svg>,
  team: <svg width="46" height="47"><rect width="46" height="47" fill="#0a7be0" /><circle cx="23" cy="23.500" r="20" fill="#fff" /><path d="M6 23.500L15 16V21H31V16L40 23.500L31 31V26H15V31Z" fill="#0a76d8" /></svg>,
  whats: <svg width="42" height="42"><path d="M1 41L4 30A20 20 0 1 1 12 38Z" fill="#fff" /><path d="M5 37L7.500 29.500A16.500 16.500 0 1 1 13 34.500Z" fill="#25c04a" /><path d="M14 11C17 8 18 12 19 15C19 16 17 17 18 18C19 21 22 24 25 25L27 22C30 23 33 24 31 28C28 32 21 29 17 25C13 21 10 15 14 11Z" fill="#fff" /></svg>,
  folder: <svg width="44" height="36"><path d="M1 1H17L21 5H43V35H1Z" fill="#ffe293" /><path d="M1 1H17L19 6H1Z" fill="#f5c02e" /><rect x="5" y="3" width="8" height="3" fill="#fff" /><path d="M8 35V22Q8 19 11 19H33Q36 19 36 22V35H28V27H16V35Z" fill="#37b0e4" /></svg>,
  cmd: <svg width="44" height="35"><rect width="44" height="35" rx="1" fill="#9fa0a0" /><rect x="3" y="5" width="38" height="27" fill="#141414" /><path d="M3 19L41 11V5H3Z" fill="#3a3a3a" /><text x="6" y="15" fontSize="9" fill="#ccc" fontFamily="Liberation Mono, monospace">C:\_</text></svg>,
  rhino: <svg width="46" height="47"><rect width="46" height="47" fill="#161616" /><path d="M0 0H20L8 14L16 28L6 24L0 12Z" fill="#777" /><path d="M10 6L15 2L25 12L36 3L33 14L40 18L45 34L43 40L35 46L28 38L31 31L22 31L9 22Z" fill="#e9e9e9" /><path d="M25 0H45V8L36 2Z" fill="#999" /><path d="M13 10L22 18L18 26M34 20L38 34" stroke="#444" fill="none" strokeWidth="2" /><circle cx="23" cy="25" r="2" fill="#d33" /></svg>,
  droid: <svg width="45" height="47"><rect width="45" height="47" rx="2" fill="#8d8e90" /><path d="M7 0H25L22 4L24 8L17 10L15 4H11L9 16L2 14L5 8Z" fill="#3c2a1d" /><path d="M3 45Q5 27 22 27T42 45Z" fill="#86ad2d" stroke="#eee" strokeWidth="2" /><path d="M11 23L15 29M34 23L29 29" stroke="#eee" strokeWidth="3" /><circle cx="15" cy="38" r="1.800" fill="#fff" /><circle cx="30" cy="38" r="1.800" fill="#fff" /></svg>,
  knot: <svg width="42" height="42"><rect x="12" y="2" width="18" height="10" rx="3" fill="#d0202c" stroke="#aaa" strokeWidth="1.200" /><rect x="12" y="30" width="18" height="10" rx="3" fill="#d0202c" stroke="#aaa" strokeWidth="1.200" /><path d="M11 9H29V14L36 13L41 18V27L35 32H13L6 30L1 25V16L5 12L11 13Z" fill="#2e2e2e" stroke="#aaa" strokeWidth="1.200" /><path d="M12 12L29 20L36 16M6 26L13 22L29 30" stroke="#666" strokeWidth="1.500" fill="none" /></svg>,
  blender: <svg width="44" height="38"><path d="M21 1L27 5C38 12 43 18 43 24C43 32 36 37 29 37C20 37 15 31 15 25L4 32L1 29L13 18L18 14H6V10H24L20 4Z" fill="#f57a0b" /><circle cx="28" cy="23" r="9.500" fill="#fff" /><circle cx="28" cy="22.500" r="5.500" fill="#0d4d92" /></svg>,
  atom: <svg width="47" height="47"><defs><linearGradient id="at" x2="0" y2="1"><stop offset="0" stopColor="#a9dc8e" /><stop offset="1" stopColor="#06a06c" /></linearGradient></defs><circle cx="23.500" cy="23.500" r="23.500" fill="url(#at)" /><g fill="none" stroke="#e8fff2" strokeWidth="1.600"><ellipse cx="23.500" cy="24" rx="6" ry="15" transform="rotate(22 23.500 24)" /><ellipse cx="23.500" cy="24" rx="6" ry="15" transform="rotate(-38 23.500 24)" /><ellipse cx="23.500" cy="24" rx="6" ry="15" transform="rotate(82 23.500 24)" /></g><circle cx="23.500" cy="24" r="2" fill="#fff" /></svg>,
  feather: <svg width="45" height="46"><path d="M43 1Q46 13 40 21L29 26L32 9Z" fill="#c5c9c9" /><ellipse cx="26" cy="31" rx="17" ry="10" fill="none" stroke="#668c22" strokeWidth="3" /><path d="M25 14Q36 13 37 25Q36 37 27 39Q15 39 14 30Q16 18 25 14Z" fill="#b35a55" /><path d="M15 36L19 42L8 43L1 46L8 40Z" fill="#c9c9c9" /></svg>,
  chrome: <svg width="44" height="44" viewBox="0 0 44 44"><circle cx="22" cy="22" r="22" fill="#ffcd40" /><path d="M3 11A22 22 0 0 0 20 44L30 27L13 27Z" fill="#0f9d58" /><path d="M22 22L3 11A22 22 0 0 1 41 11.500H22Z" fill="#db4437" /><circle cx="22" cy="22" r="10.500" fill="#f1f1f1" /><circle cx="22" cy="22" r="8.300" fill="#4285f4" /></svg>,
  spotify: <svg width="42" height="43"><circle cx="21" cy="21.500" r="21" fill="#1ed760" /><path d="M9 14Q22 10 34 17M10 22Q21 18 31 24M12 29Q21 26 28 31" stroke="#1f170f" strokeLinecap="round" strokeWidth="3.500" fill="none" /></svg>,
  notes: <svg width="36" height="35"><path d="M0 0H35V17H18V35H0Z" fill="#fff" /><path d="M35 19V35H20Z" fill="#fff" /></svg>,
};
const Adobe = ({ t, w, c, bg }) => (
  <AdobeTile $c={c} $bg={bg}><Label w={w} $size={25} $weight={700} $color={c} $family="Lato">{t}</Label></AdobeTile>
);
const TASKS = [
  ['team'], ['whats'], ['folder', 1], ['cmd'], ['rhino'], ['droid'], ['qgis'], ['id'], ['ps'], ['ai', 1, 1], ['knot'],
  ['blender'], ['atom'], ['feather'], ['chrome', 1], ['spotify', 1], ['notes', 1], ['qgis', 1],
];
const taskIcon = k => {
  if (k === 'qgis') return <Qgis />;
  if (k === 'id') return <Adobe t="Id" w={20} c="#e23c9b" bg="#2f0a1f" />;
  if (k === 'ps') return <Adobe t="Ps" w={26} c="#76b7f5" bg="#0b0747" />;
  if (k === 'ai') return <Adobe t="Ai" w={23} c="#f5a328" bg="#2e1a05" />;
  return ICONS[k];
};

const MENUS = [
  ['Archivo', 31, 63], ['Edición', 27, 59], ['Objeto', 27, 54], ['Texto', 29, 43], ['Seleccionar', 29, 93],
  ['Efecto', 28, 49], ['Ver', 26, 28], ['Ventana', 27, 66], ['Ayuda', 28, 52],
];
const ink = '#2e3f57';

export default function App() {
  return (
    <Page>
      <Global />
      <Heading>
        <Label w={818} $size={101} $weight={700} $italic $color={ink} $family='"Open Sans"'>borrar y bloquear</Label>
      </Heading>
      <Desktop>
        <AppFrame>
          <MenuBar>
            <Label w={27} $ml={18} $size={33} $weight={700} $color="#d9963c" $family="Lato">Ai</Label>
            {MENUS.map(([t, ml, w]) => <Label key={t} w={w} $ml={ml} $size={17}>{t}</Label>)}
            <VRule $ml={20} $h={32} />
            <BridgeBadge><Label w={12} $size={12} $weight={700} $color="#333">Br</Label></BridgeBadge>
            <Slot $ml={35}>
              <svg width="29" height="23"><rect x="1" y="1" width="27" height="21" fill="#444" stroke="#ddd" strokeWidth="2" /><path d="M3 3H13V20H3Z" fill="#888" /><path d="M15 1V22M15 11H28" stroke="#ddd" strokeWidth="2" /></svg>
            </Slot>
            <Slot $ml={3}><Tri h={9} /></Slot>
            <Push />
            <VRule $h={30} />
            <Label w={160} $ml={17} $size={17.500}>Aspectos esenciales</Label>
            <Slot $ml={15} $mt={4}><Tri w={8} h={5} /></Slot>
            <WinButtons>
              <WinButton $first><svg width="15" height="5"><path d="M0 0H15V5H0Z" fill="#eee" /></svg></WinButton>
              <WinButton><svg width="16" height="13"><rect x="1.500" y="1.500" width="13" height="10" fill="none" stroke="#eee" strokeWidth="3" /></svg></WinButton>
              <WinButton><svg width="16" height="13"><path d="M1 1L15 12M15 1L1 12" stroke="#eee" strokeWidth="3.200" /></svg></WinButton>
            </WinButtons>
          </MenuBar>
          <Body>
            <ControlBar>
              <Grip />
              <Label w={113} $ml={9} $size={15.500}>No hay selección</Label>
              <VRule $ml={77} $h={38} />
              <Control $ml={9} $w={52}><Value $bg="#0bff34" /><Drop><Tri /></Drop></Control>
              <Control $ml={11} $w={52}>
                <Value $bg="#fff"><svg width="25" height="25"><rect x="8" y="8" width="10" height="10" fill="none" stroke="#111" strokeWidth="1.800" /><path d="M4 24L22 2" stroke="#f00" strokeWidth="2.600" /></svg></Value>
                <Drop><Tri /></Drop>
              </Control>
              <Label w={42} $ml={20} $size={15.500} $color="#ef8d2f" $dotted>Trazo:</Label>
              <Control $ml={11} $w={119}><Steps w={21} /><Value /><Drop $w={20}><Tri /></Drop></Control>
              <Control $ml={11} $w={165}><Value $bg="#777" /><Drop $w={21}><Tri c="#7d7d7d" /></Drop></Control>
              <Control $ml={11} $w={159}>
                <Value $bg="#e2e2e2">
                  <Label w={5} $ml={9} $size={15} $color="#222">•</Label>
                  <Label w={94} $ml={17} $size={15.500} $color="#222">Redondo 3 pt.</Label>
                </Value>
                <Drop $w={21}><Tri /></Drop>
              </Control>
              <Label w={68} $ml={13} $size={15.500} $color="#ef8d2f" $dotted>Opacidad:</Label>
              <Control $ml={12} $w={104}><Value><Label w={38} $ml={5} $size={15.500} $color="#111">100%</Label></Value><Drop $w={20}><Tri /></Drop></Control>
              <Label w={40} $ml={10} $size={15.500}>Estilo:</Label>
              <Control $ml={12} $w={52}><Value $bg="#e4e4e4" /><Drop $w={21}><Tri /></Drop></Control>
              <VRule $ml={10} $h={38} />
              <Button $w={193} $ml={9}><Label w={130} $size={15.500}>Ajustar documento</Label></Button>
              <Button $w={136} $ml={10}><Label w={84} $size={15.500}>Preferencias</Label></Button>
              <Slot $ml={18}>
                <svg width="26" height="24"><path d="M1 7H10V17H1ZM15 2H23V12H15Z" fill="#777" stroke="#bbb" strokeWidth="1.500" strokeDasharray="3 1.500" /><path d="M12 5V24L16 18L24 17Z" fill="#ccc" stroke="#444" /></svg>
              </Slot>
              <Slot $ml={10}><Tri h={9} /></Slot>
              <Push />
              <Slot>
                <svg width="22" height="12"><path d="M0 3H8L4 8Z" fill="#ddd" /><path d="M9 1.500H12M9 6H12M9 10.500H12M14 1.500H21M14 6H21M14 10.500H21" stroke="#ddd" strokeWidth="2" /></svg>
              </Slot>
              <Slot $ml={24} />
            </ControlBar>
            <Work>
              <DocColumn>
                <TabBar>
                  <DocTab $w={526} $active>
                    <Label w={471} $ml={15} $size={15.500} $weight={600}>plantilla_mapas y gráficos.ai* al 66.67% (RGB/Previsualizar)</Label>
                    <Slot $ml={18}><svg width="10" height="9"><path d="M1 1L9 8M9 1L1 8" stroke="#ddd" strokeWidth="2" /></svg></Slot>
                  </DocTab>
                  <DocTab $w={471}>
                    <Label w={416} $ml={14} $size={15.500} $weight={500} $color="#9a9a9a">illustrator_snapshots.ai* al 100% (RGB/Previsualizar)</Label>
                    <Slot $ml={19}><svg width="10" height="9"><path d="M1 1L9 8M9 1L1 8" stroke="#ddd" strokeWidth="2" /></svg></Slot>
                  </DocTab>
                </TabBar>
                <Viewport>
                  <Canvas>
                    <Artboard $x={511} $w={867}>
                      <Block $x={22} $y={16} $w={146} $h={43} $bg="#00ffff" />
                      <Note x={35} y={26} w={70} size={18.500} color={ink}>Grupo 1</Note>
                      <Block $x={22} $y={82} $w={147} $h={397} $bw={2} $bc="#ff6bff" />
                      <Block $x={22} $y={82} $w={147} $h={120} $bw={2} $bc="#9a6cf5" $top="#c040f0" $bottom="#00ffff" />
                      <Block $x={22} $y={209} $w={147} $h={207} $bw={2} $bc="#9a6cf5" $top="#30ffff" $bottom="#40ffff" />
                      <Note x={35} y={94} w={64} color={ink}>Título del</Note>
                      <Note x={35} y={111} w={37} color={ink}>mapa</Note>
                      <Note x={186} y={94} w={108}>zona para título</Note>
                      <Note x={186} y={214} w={123}>zona para leyenda</Note>
                      <Note x={260} y={547} w={149}>línea base para escala</Note>
                      <Block $x={34} $y={574} $w={409} $h={3} $bg="#ff80ff" />
                    </Artboard>
                    <Artboard $x={1397} $w={865} $active>
                      <Block $x={21} $y={16} $w={147} $h={43} $bg="#00ffff" />
                      <Note x={34} y={26} w={70} size={18.500} color={ink}>Grupo 1</Note>
                      <Block $x={21} $y={82} $w={147} $h={397} $bw={2} $bc="#ff6bff" />
                      <Block $x={21} $y={82} $w={147} $h={151} $bw={2} $bc="#9a6cf5" $top="#b050f0" $bottom="#00ffff" />
                      <Block $x={21} $y={243} $w={147} $h={97} $bw={2} $bc="#9a6cf5" $top="#20f0ff" $bottom="#00ffff" />
                      <Block $x={209} $y={82} $w={637} $h={514} $bw={3} $bc="#ff22ff" />
                      <Note x={34} y={94} w={64} color={ink}>Título del</Note>
                      <Note x={34} y={111} w={48} color={ink}>gráfico</Note>
                      <Block $x={34} $y={263} $w={20} $h={21} $bg="#0bff34" />
                      <Block $x={34} $y={296} $w={20} $h={21} $bg="#47d9ff" />
                      <Note x={65} y={266} w={25} size={11} weight={500} italic={false} color={ink}>tipo 1</Note>
                      <Note x={65} y={298} w={25} size={11} weight={500} italic={false} color={ink}>tipo 2</Note>
                      <Note x={456} y={56} w={118}>zona para gráfico</Note>
                      <Note x={186} y={94} w={107}>zona para título</Note>
                      <Note x={186} y={214} w={123}>zona para leyenda</Note>
                    </Artboard>
                  </Canvas>
                  <VScroll>
                    <Tri dir="up" w={15} h={10} />
                    <VThumb />
                    <Tri w={15} h={10} />
                  </VScroll>
                </Viewport>
                <StatusBar>
                  <StatusTools>
                    <Control $ml={6} $w={89} $h={23}><Value><Label w={51} $ml={3} $size={15} $color="#111">66.67%</Label></Value><Drop $w={21}><Tri w={9} /></Drop></Control>
                    <Slot $ml={13}><svg width="14" height="13"><path d="M1 0V13" stroke="#ccc" strokeWidth="2" /><path d="M12 0V13L4 6.500Z" fill="#ccc" /></svg></Slot>
                    <Slot $ml={15}><Tri dir="left" w={9} h={13} c="#ccc" /></Slot>
                    <Control $ml={15} $w={88} $h={23}><Value><Label w={8} $ml={4} $size={15} $color="#111">2</Label></Value><Drop $w={20}><Tri w={9} /></Drop></Control>
                    <Slot $ml={15}><Tri dir="right" w={9} h={13} c="#6c6c6c" /></Slot>
                    <Slot $ml={14}><svg width="14" height="13"><path d="M12 0V13" stroke="#6c6c6c" strokeWidth="2" /><path d="M1 0V13L9 6.500Z" fill="#6c6c6c" /></svg></Slot>
                    <VRule $ml={12} $h={23} />
                    <Label w={62} $ml={120} $size={15}>Selección</Label>
                    <VRule $ml={122} $h={23} />
                    <Slot $ml={10}><Tri dir="right" w={9} h={13} c="#ccc" /></Slot>
                  </StatusTools>
                  <HScroll>
                    <Slot $ml={7}><Tri dir="left" w={10} h={13} /></Slot>
                    <HThumb />
                    <Push />
                    <Tri dir="right" w={10} h={14} />
                    <Slot $ml={8} />
                  </HScroll>
                </StatusBar>
                <Tools />
              </DocColumn>
              <Dock>
                <DockHead><svg width="12" height="8"><path d="M0 0V8L6 4ZM6 0V8L12 4Z" fill="#ccc" /></svg></DockHead>
                <StrokePanel />
                <LayersPanel />
                <ColorPanel />
              </Dock>
            </Work>
          </Body>
        </AppFrame>
        <TaskBar>
          <TaskCell $w={93}>{ICONS.win}</TaskCell>
          <TaskCell $w={93}>{ICONS.view}</TaskCell>
          <TaskCell $w={3} />
          {TASKS.map(([k, run, on], i) => <TaskCell key={i} $run={run} $on={on}>{taskIcon(k)}</TaskCell>)}
          <Tray>
            <svg width="28" height="30" fill="none" stroke="#eee" strokeWidth="2.200"><circle cx="19" cy="6" r="5" /><path d="M12 17Q13 11 19 11T27 19" /><circle cx="8" cy="16" r="5" /><path d="M1 29Q1 21 8 21T16 29" /></svg>
            <Slot $ml={43}><svg width="24" height="14"><path d="M1 13L12 2L23 13" fill="none" stroke="#eee" strokeWidth="2" /></svg></Slot>
            <Slot $ml={19}><svg width="31" height="21"><path d="M8 5H28V19H8V12" fill="none" stroke="#eee" strokeWidth="2" /><path d="M11 7H23V17H9V11H11ZM29 9H31V15H29ZM1 3H8V8L5 10L1 8ZM2 0H3.500V3H2ZM5.500 0H7V3H5.500Z" fill="#eee" /></svg></Slot>
            <Slot $ml={16} $mt={4}><svg width="31" height="27"><path d="M3 18Q-1 14 3 10Q3 4 9 5Q12 -1 18 2Q23 4 22 9Q28 11 27 17L14 23Z" fill="#eee" /><circle cx="22" cy="18" r="9" fill="#e8eefc" /><path d="M16.500 17A6 6 0 0 1 27 14.500M27.500 19A6 6 0 0 1 17 21.500" fill="none" stroke="#1c5fc0" strokeWidth="2.400" /><path d="M28 10V16H23ZM16 26V20H21Z" fill="#1c5fc0" /></svg></Slot>
            <Slot $ml={20} $mt={4}><svg width="24" height="24" fill="none" stroke="#ccc" strokeWidth="2"><path d="M1 23Q3 3 23 1M7 23Q8 9 23 7M13 23Q14 14 23 13" /><path d="M19 18H23V22H19Z" fill="#eee" stroke="none" /></svg></Slot>
            <Slot $ml={17}><svg width="31" height="24" fill="none" stroke="#eee" strokeWidth="2"><path d="M1 8H5L11 2V22L5 17H1Z" /><path d="M16 9Q18 12 16 16M20 6Q24 12 20 19" /><path d="M25 2Q32 12 25 22" stroke="#888" /></svg></Slot>
            <Label w={41} $ml={20} $size={22.500} $color="#f0f0f0">CAT</Label>
            <Clock>
              <Label w={54} $size={22.500} $color="#f4f4f4">12:37</Label>
              <Label w={118} $size={22.500} $color="#f4f4f4">05/07/2018</Label>
            </Clock>
            <Notice>
              <svg width="31" height="29"><path d="M0 0H31V24H16L11 29V24H0Z" fill="#fff" /><path d="M6 7H25M6 13H25M6 19H20" stroke="#1f170f" strokeWidth="2" /></svg>
              <Badge><Label w={11} $size={20} $weight={600} $color="#fff">3</Label></Badge>
            </Notice>
            <ShowDesk />
          </Tray>
        </TaskBar>
      </Desktop>
    </Page>
  );
}
